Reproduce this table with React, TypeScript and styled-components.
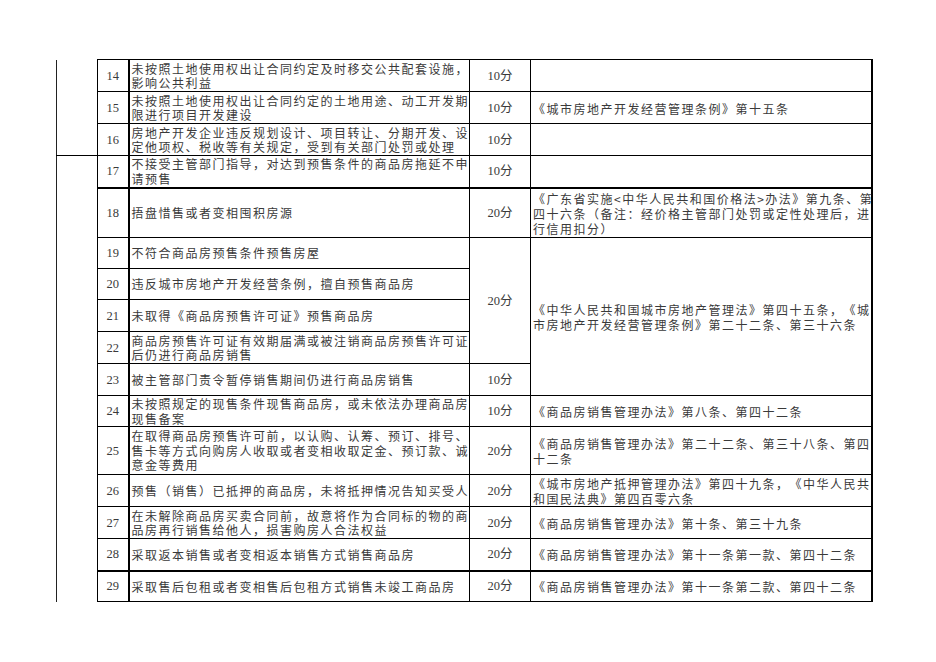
import React from "react";
import styled, { createGlobalStyle } from "styled-components";

const GlobalStyle = createGlobalStyle`
  html, body {
    margin: 0;
    padding: 0;
    background: #fff;
  }
`;

type Item = {
  no: number;
  desc: string[];
  score?: string;
  scoreSpan?: number;
  law?: string[];
  lawSpan?: number;
  height: number;
  thickTop?: boolean;
};

const items: Item[] = [
  {
    no: 14,
    desc: ["未按照土地使用权出让合同约定及时移交公共配套设施，", "影响公共利益"],
    score: "10分",
    law: [],
    height: 32,
  },
  {
    no: 15,
    desc: ["未按照土地使用权出让合同约定的土地用途、动工开发期", "限进行项目开发建设"],
    score: "10分",
    law: ["《城市房地产开发经营管理条例》第十五条"],
    height: 32,
  },
  {
    no: 16,
    desc: ["房地产开发企业违反规划设计、项目转让、分期开发、设", "定他项权、税收等有关规定，受到有关部门处罚或处理"],
    score: "10分",
    law: [],
    height: 32,
  },
  {
    no: 17,
    desc: ["不接受主管部门指导，对达到预售条件的商品房拖延不申", "请预售"],
    score: "10分",
    law: [],
    height: 32,
  },
  {
    no: 18,
    desc: ["捂盘惜售或者变相囤积房源"],
    score: "20分",
    law: [
      "《广东省实施<中华人民共和国价格法>办法》第九条、第",
      "四十六条（备注：经价格主管部门处罚或定性处理后，进",
      "行信用扣分）",
    ],
    height: 50,
    thickTop: true,
  },
  {
    no: 19,
    desc: ["不符合商品房预售条件预售房屋"],
    score: "20分",
    scoreSpan: 4,
    law: ["《中华人民共和国城市房地产管理法》第四十五条，《城", "市房地产开发经营管理条例》第二十二条、第三十六条"],
    lawSpan: 5,
    height: 31,
  },
  { no: 20, desc: ["违反城市房地产开发经营条例，擅自预售商品房"], height: 31 },
  { no: 21, desc: ["未取得《商品房预售许可证》预售商品房"], height: 32 },
  {
    no: 22,
    desc: ["商品房预售许可证有效期届满或被注销商品房预售许可证", "后仍进行商品房销售"],
    height: 32,
  },
  { no: 23, desc: ["被主管部门责令暂停销售期间仍进行商品房销售"], score: "10分", height: 32 },
  {
    no: 24,
    desc: ["未按照规定的现售条件现售商品房，或未依法办理商品房", "现售备案"],
    score: "10分",
    law: ["《商品房销售管理办法》第八条、第四十二条"],
    height: 31,
  },
  {
    no: 25,
    desc: [
      "在取得商品房预售许可前，以认购、认筹、预订、排号、",
      "售卡等方式向购房人收取或者变相收取定金、预订款、诚",
      "意金等费用",
    ],
    score: "20分",
    law: ["《商品房销售管理办法》第二十二条、第三十八条、第四", "十二条"],
    height: 48,
  },
  {
    no: 26,
    desc: ["预售（销售）已抵押的商品房，未将抵押情况告知买受人"],
    score: "20分",
    law: ["《城市房地产抵押管理办法》第四十九条，《中华人民共", "和国民法典》第四百零六条"],
    height: 32,
  },
  {
    no: 27,
    desc: ["在未解除商品房买卖合同前，故意将作为合同标的物的商", "品房再行销售给他人，损害购房人合法权益"],
    score: "20分",
    law: ["《商品房销售管理办法》第十条、第三十九条"],
    height: 32,
  },
  {
    no: 28,
    desc: ["采取返本销售或者变相返本销售方式销售商品房"],
    score: "20分",
    law: ["《商品房销售管理办法》第十一条第一款、第四十二条"],
    height: 32,
  },
  {
    no: 29,
    desc: ["采取售后包租或者变相售后包租方式销售未竣工商品房"],
    score: "20分",
    law: ["《商品房销售管理办法》第十一条第二款、第四十二条"],
    height: 31,
    thickTop: true,
  },
];

const App = () => {
  return (
    <Page>
      <GlobalStyle />
      <Sheet>
        <colgroup>
          <col style={{ width: 41 }} />
          <col style={{ width: 31 }} />
          <col style={{ width: 341 }} />
          <col style={{ width: 61 }} />
          <col style={{ width: 341 }} />
        </colgroup>
        <tbody>
          {items.map((it, i) => (
            <Row key={it.no} $height={it.height}>
              {i === 0 && <Category rowSpan={3} $open="top" />}
              {i === 3 && <Category rowSpan={13} $open="bottom" />}
              <NoCell $thickTop={it.thickTop}>{it.no}</NoCell>
              <DescCell $thickTop={it.thickTop}>
                {it.desc.map((line) => (
                  <Line key={line}>{line}</Line>
                ))}
              </DescCell>
              {it.score && (
                <ScoreCell rowSpan={it.scoreSpan || 1} $thickTop={it.thickTop}>
                  {it.score}
                </ScoreCell>
              )}
              {it.law && (
                <LawCell rowSpan={it.lawSpan || 1} $thickTop={it.thickTop}>
                  {it.law.map((line) => (
                    <Line key={line}>{line}</Line>
                  ))}
                </LawCell>
              )}
            </Row>
          ))}
        </tbody>
      </Sheet>
    </Page>
  );
};

export default App;

const Page = styled.div`
  padding: 59px 0 0 56px;
  width: 936px;
  height: 662px;
  box-sizing: border-box;
`;
const Sheet = styled.table`
  border-collapse: collapse;
  table-layout: fixed;
  width: 816px;
  font-family: "Noto Sans CJK SC", "Liberation Serif", serif;
  color: #3a3a3a;
  text-spacing-trim: space-all;
`;
const Row = styled.tr<{ $height: number }>`
  height: ${(p) => p.$height}px;
`;
const Cell = styled.td<{ $thickTop?: boolean }>`
  border: 1px solid #000;
  border-top-width: ${(p) => (p.$thickTop ? 2 : 1)}px;
  padding: 0;
  vertical-align: middle;
`;
const Category = styled.td<{ $open: "top" | "bottom" }>`
  border-left: 1px solid #222;
  border-top: ${(p) => (p.$open === "top" ? "none" : "1px solid #000")};
  border-bottom: ${(p) => (p.$open === "bottom" ? "none" : "1px solid #000")};
  padding: 0;
`;
const NoCell = styled(Cell)`
  border-right-width: 2px;
  text-align: center;
  font-family: "Liberation Serif", serif;
  font-size: 12.5px;
  line-height: 14px;
`;
const DescCell = styled(Cell)`
  padding: 1px 0 0 2px;
  font-size: 12px;
  letter-spacing: 1.5px;
  line-height: 14.5px;
`;
const ScoreCell = styled(Cell)`
  text-align: center;
  font-family: "Liberation Serif", "Noto Sans CJK SC", serif;
  font-size: 12.5px;
  line-height: 14px;
`;
const LawCell = styled(Cell)`
  border-right-width: 2px;
  padding: 1px 0 0 2px;
  font-size: 12px;
  letter-spacing: 1.5px;
  line-height: 15px;
`;
const Line = styled.span`
  display: block;
  white-space: nowrap;
`;
